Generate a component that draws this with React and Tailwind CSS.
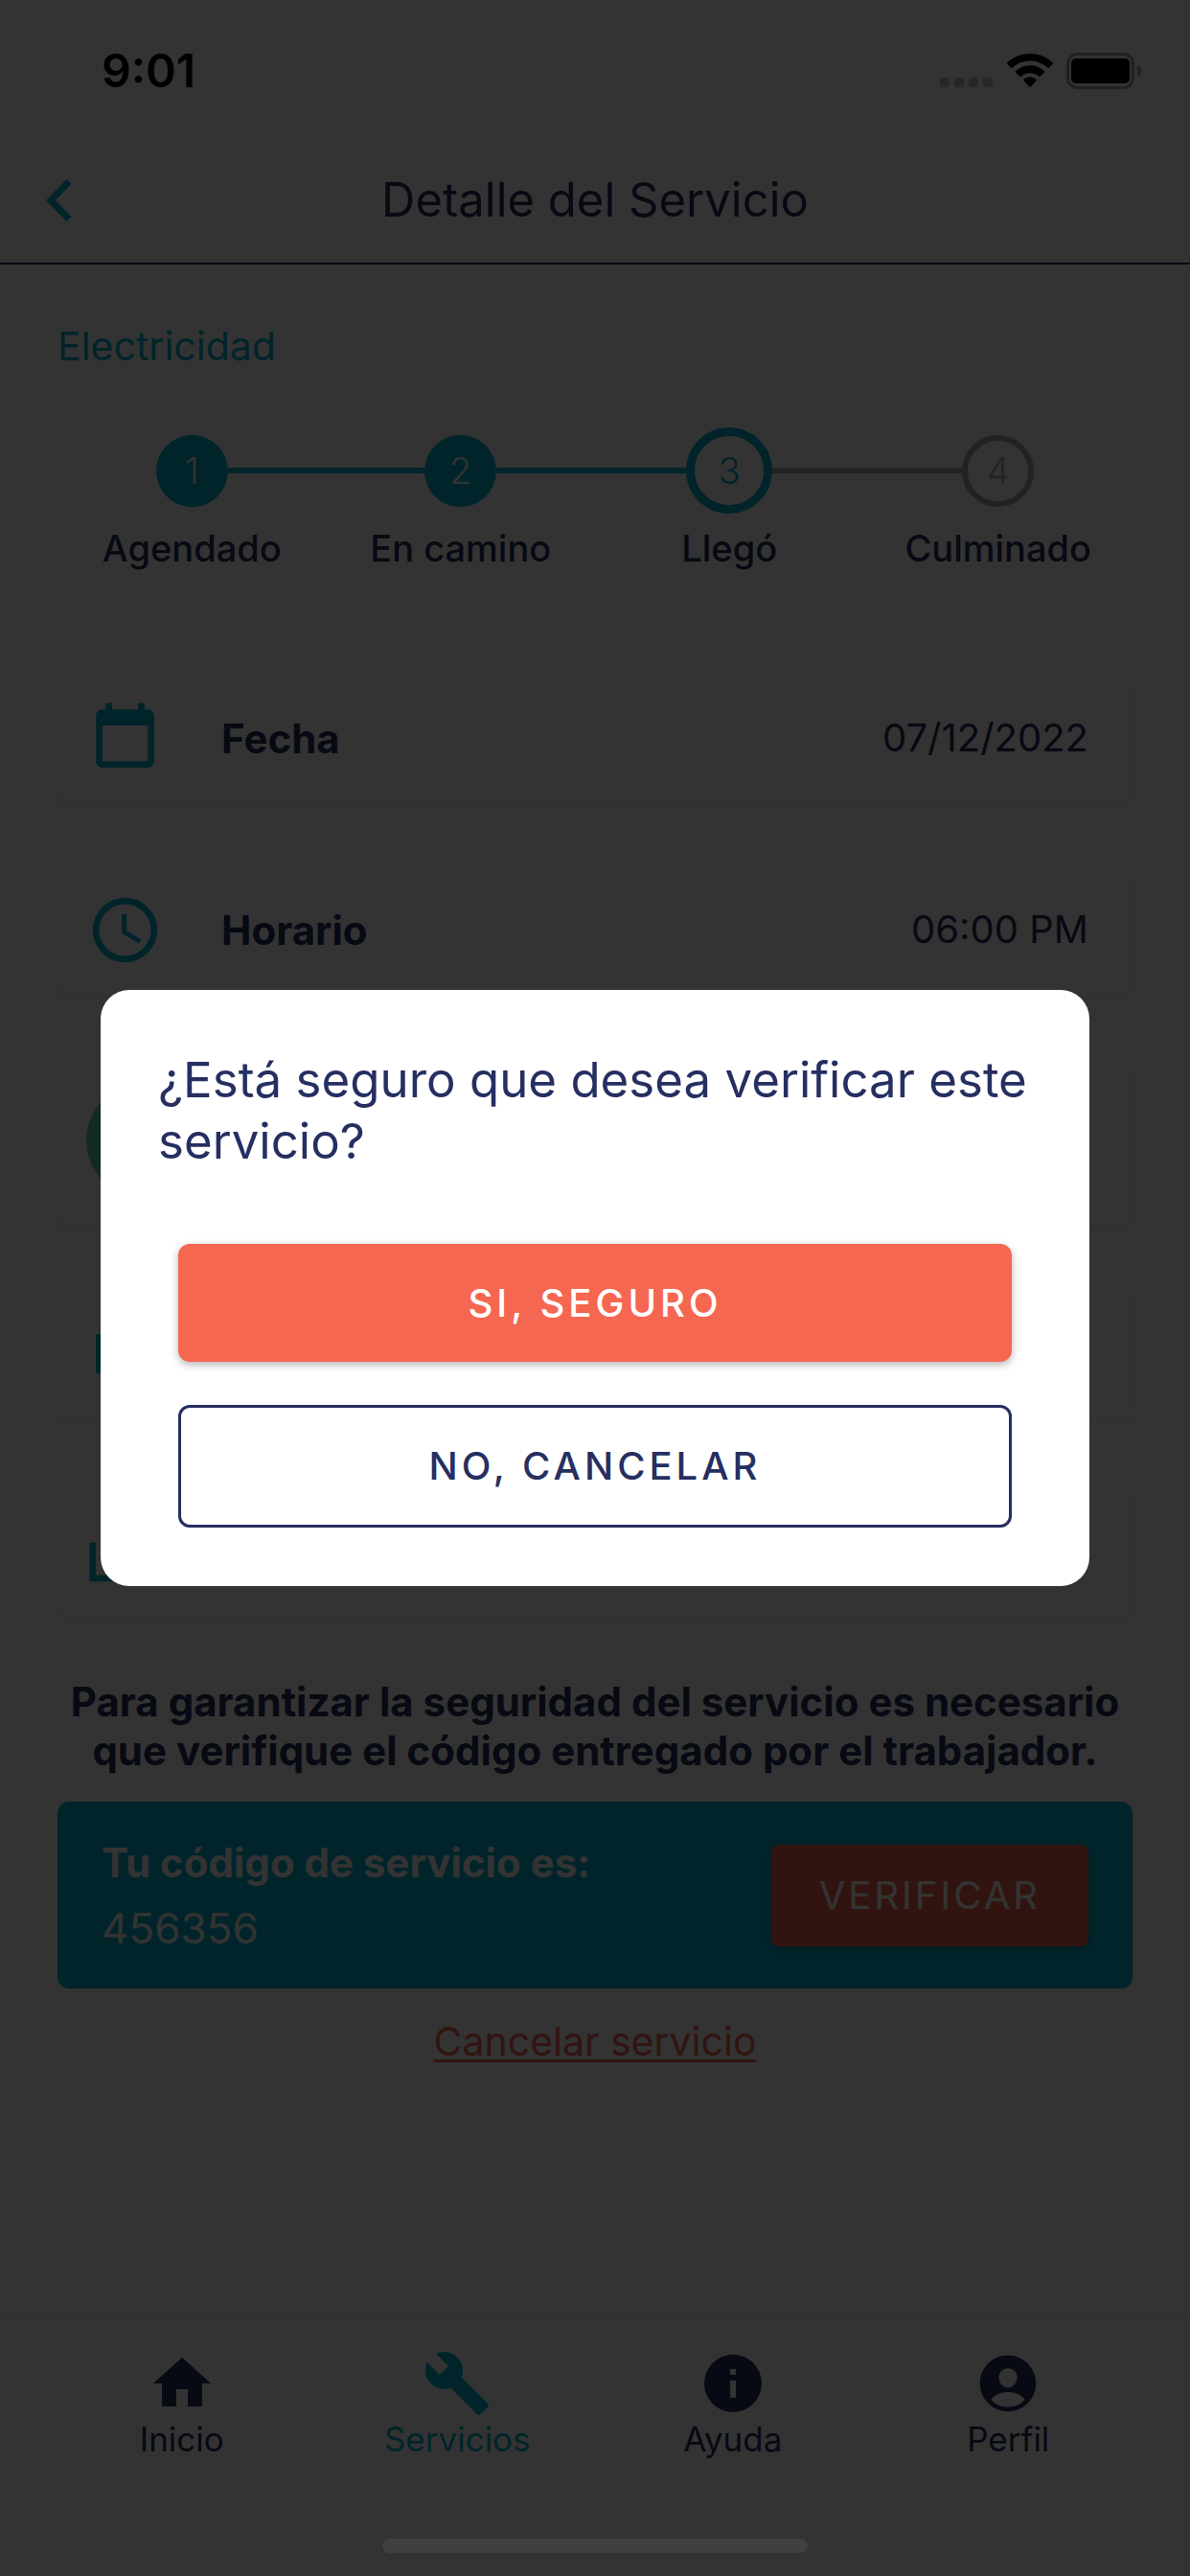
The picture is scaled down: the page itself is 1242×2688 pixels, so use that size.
import React, { useState } from 'react'
import { IoPersonCircle } from 'react-icons/io5'

const ICONS = {
  calendar: 'M19,19H5V8H19M16,1V3H8V1H6V3H5C3.89,3 3,3.89 3,5V19A2,2 0 0,0 5,21H19A2,2 0 0,0 21,19V5C21,3.89 20.1,3 19,3H18V1',
  clock: 'M12,20A8,8 0 0,0 20,12A8,8 0 0,0 12,4A8,8 0 0,0 4,12A8,8 0 0,0 12,20M12,2A10,10 0 0,1 22,12A10,10 0 0,1 12,22C6.47,22 2,17.5 2,12A10,10 0 0,1 12,2M12.5,7V12.25L17,14.92L16.25,16.15L11,13V7H12.5Z',
  cash: 'M3,6H21V18H3V6M12,9A3,3 0 0,1 15,12A3,3 0 0,1 12,15A3,3 0 0,1 9,12A3,3 0 0,1 12,9M7,8A2,2 0 0,1 5,10V14A2,2 0 0,1 7,16H17A2,2 0 0,1 19,14V10A2,2 0 0,1 17,8H7Z',
  cashMultiple: 'M5,6H23V18H5V6M14,9A3,3 0 0,1 17,12A3,3 0 0,1 14,15A3,3 0 0,1 11,12A3,3 0 0,1 14,9M9,8A2,2 0 0,1 7,10V14A2,2 0 0,1 9,16H19A2,2 0 0,1 21,14V10A2,2 0 0,1 19,8H9M1,10H3V20H19V22H1V10Z',
  home: 'M10,20V14H14V20H19V12H22L12,3L2,12H5V20H10Z',
  wrench: 'M22.7,19L13.6,9.9C14.5,7.6 14,4.9 12.1,3C10.1,1 7.1,0.6 4.7,1.7L9,6L6,9L1.6,4.7C0.4,7.1 0.9,10.1 2.9,12.1C4.8,14 7.5,14.5 9.8,13.6L18.9,22.7C19.3,23.1 19.9,23.1 20.3,22.7L22.6,20.4C23.1,20 23.1,19.3 22.7,19Z',
  info: 'M13,9H11V7H13M13,17H11V11H13M12,2A10,10 0 0,0 2,12A10,10 0 0,0 12,22A10,10 0 0,0 22,12A10,10 0 0,0 12,2Z',
}

const STEPS = [
  { label: 'Agendado', status: 'done' },
  { label: 'En camino', status: 'done' },
  { label: 'Llegó', status: 'current' },
  { label: 'Culminado', status: 'pending' },
]

const CIRCLE = {
  done: 'size-[75px] bg-[#00b4d2] text-white',
  current: 'size-[90px] border-9 border-[#00b4d2] text-[#00b4d2]',
  pending: 'size-[75px] border-6 border-[#aaaaaa] text-[#aaaaaa]',
}

const TABS = [
  { label: 'Inicio', icon: 'home' },
  { label: 'Servicios', icon: 'wrench', active: true },
  { label: 'Ayuda', icon: 'info' },
  { label: 'Perfil' },
]

function Icon({ name, className }) {
  return (
    <svg viewBox="0 0 24 24" fill="currentColor" fillRule="evenodd" className={className} aria-hidden="true">
      <path d={ICONS[name]} />
    </svg>
  )
}

function StatusBar() {
  return (
    <div className="flex h-36 items-center justify-between pt-1 pr-[50px] pl-[106px] text-black">
      <span className="text-[48px] font-semibold">9:01</span>
      <div className="flex items-center">
        <svg viewBox="0 0 56 36" className="h-9 w-14 text-[#c4c4c4]" fill="currentColor">
          <rect x="0" y="25" width="10" height="10" rx="3" />
          <rect x="15" y="25" width="10" height="10" rx="3" />
          <rect x="30" y="25" width="10" height="10" rx="3" />
          <rect x="45" y="25" width="10" height="10" rx="3" />
        </svg>
        <svg viewBox="0 0 48 36" className="ml-[14px] h-9 w-12" fill="currentColor">
          <path d="M24 0C14.800 0 6.500 3.500 .3 9.300a1 1 0 0 0 0 1.400l4 4.100a1 1 0 0 0 1.400 0A26.500 26.500 0 0 1 24 7.600c7 0 13.500 2.700 18.300 7.200a1 1 0 0 0 1.400 0l4-4.100a1 1 0 0 0 0-1.400A34.600 34.600 0 0 0 24 0z" />
          <path d="M24 12.200c-5.800 0-11 2.200-15 5.800a1 1 0 0 0 0 1.500l4.200 4.200a1 1 0 0 0 1.400 0 14.200 14.200 0 0 1 18.800 0 1 1 0 0 0 1.400 0l4.200-4.200a1 1 0 0 0 0-1.500 22.300 22.300 0 0 0-15-5.800z" />
          <path d="M24 24.300c-2.600 0-4.800 1-6.500 2.500a1 1 0 0 0 0 1.400l5.800 6.200a1 1 0 0 0 1.400 0l5.800-6.200a1 1 0 0 0 0-1.400 9.700 9.700 0 0 0-6.500-2.500z" />
        </svg>
        <svg viewBox="0 0 79 38" className="ml-[14px] h-[38px] w-[79px]">
          <rect x="1.500" y="1.500" width="68" height="35" rx="10" fill="none" stroke="#a0a0a0" strokeWidth="3" />
          <rect x="5" y="6" width="61" height="26" rx="5" fill="black" />
          <path d="M74 13c6 2 6 10 0 12z" fill="#a0a0a0" />
        </svg>
      </div>
    </div>
  )
}

function Header() {
  return (
    <header className="grid h-[132px] grid-cols-[60px_1fr_60px] items-center border-b-2 border-[#262f61] px-8">
      <button type="button" aria-label="Volver" className="flex justify-center text-[#00b4d2]">
        <svg viewBox="0 0 28 44" className="h-11 w-7" fill="none" stroke="currentColor" strokeWidth="7">
          <path d="M24 2.500L5 22L24 41.500" />
        </svg>
      </button>
      <h1 className="text-center text-[49px]">Detalle del Servicio</h1>
    </header>
  )
}

function StepLine({ hidden, active }) {
  const color = active ? 'bg-[#00b4d2]' : 'bg-[#aaaaaa]'
  return <span className={`h-[6px] flex-1 ${hidden ? 'bg-transparent' : color}`} />
}

function Stepper() {
  return (
    <ol className="mt-[60px] grid grid-cols-4">
      {STEPS.map((step, i) => (
        <li key={step.label} className="flex flex-col items-center gap-3">
          <div className="flex h-[90px] w-full items-center">
            <StepLine hidden={i === 0} active={step.status !== 'pending'} />
            <span className={`flex items-center justify-center rounded-full text-[38px] font-light ${CIRCLE[step.status]}`}>{i + 1}</span>
            <StepLine hidden={i === STEPS.length - 1} active={step.status === 'done'} />
          </div>
          <span className="text-[38px] leading-[48px] font-medium">{step.label}</span>
        </li>
      ))}
    </ol>
  )
}

function Card({ tall, children }) {
  return (
    <div className={`flex items-center rounded-xl bg-white pr-[46px] pl-[30px] shadow-[0_1px_5px_rgba(0,0,0,0.1)] ${tall ? 'min-h-36' : 'min-h-[140px]'}`}>
      {children}
    </div>
  )
}

function InfoCard({ icon, label, value, tall }) {
  return (
    <Card tall={tall}>
      <Icon name={icon} className="size-[81px] text-[#00b4d2]" />
      <span className="ml-[60px] flex-1 text-[42px] font-bold">{label}</span>
      <span className="text-[40px]">{value}</span>
    </Card>
  )
}

function TabBar() {
  return (
    <nav className="mt-auto grid h-[268px] grid-cols-4 items-start px-[46px] pt-[31px] shadow-[0_-3px_10px_rgba(0,0,0,0.12)]">
      {TABS.map(tab => (
        <a key={tab.label} href="#" className={`flex flex-col items-center text-[35px] leading-[44px] ${tab.active ? 'text-[#00b4d2]' : ''}`}>
          {tab.icon ? <Icon name={tab.icon} className="size-[72px]" /> : <IoPersonCircle className="size-[72px]" />}
          {tab.label}
        </a>
      ))}
    </nav>
  )
}

function ConfirmDialog({ onClose }) {
  return (
    <div className="fixed inset-0 flex items-center bg-black/80 px-[105px]">
      <div role="dialog" aria-modal="true" aria-labelledby="confirm-title"
        className="flex w-full flex-col rounded-[30px] bg-white px-[60px] pt-[62px] pb-[61px]">
        <h2 id="confirm-title" className="text-[51px] leading-[64px]">
          ¿Está seguro que desea verificar este servicio?
        </h2>
        <div className="mt-[75px] flex flex-col gap-[45px] px-[21px]">
          <button type="button" onClick={onClose}
            className="h-[123px] rounded-xl bg-[#f56750] text-[40px] font-medium tracking-[4px] text-white shadow-[0_3px_8px_rgba(0,0,0,0.3)]">
            SI, SEGURO
          </button>
          <button type="button" onClick={onClose}
            className="h-32 rounded-xl border-3 border-[#262f61] text-[40px] font-medium tracking-[4px]">
            NO, CANCELAR
          </button>
        </div>
      </div>
    </div>
  )
}

export default function App() {
  const [open, setOpen] = useState(true)

  return (
    <div className="flex min-h-screen flex-col bg-white font-[Inter,'Liberation_Sans',sans-serif] text-[#262f61]">
      <StatusBar />
      <Header />

      <main className="flex flex-col px-[60px] pt-[60px] pb-10">
        <h2 className="text-[41px] leading-[50px] text-[#00b4d2]">Electricidad</h2>
        <Stepper />

        <div className="mt-[104px] flex flex-col gap-[60px]">
          <InfoCard icon="calendar" label="Fecha" value="07/12/2022" />
          <InfoCard icon="clock" label="Horario" value="06:00 PM" />
          <Card>
            <span className="my-[30px] size-[120px] rounded-full bg-[#5fcdb4]" />
          </Card>
          <InfoCard icon="cash" tall />
          <InfoCard icon="cashMultiple" tall />
        </div>

        <p className="mt-[62px] text-center text-[42px] leading-[51px] font-bold">
          Para garantizar la seguridad del servicio es necesario que verifique el código entregado por el trabajador.
        </p>

        <div className="mt-7 flex h-[195px] items-center justify-between rounded-xl bg-[#00b4d2] px-[46px] text-white">
          <div>
            <p className="text-[42px] leading-[68px] font-bold">Tu código de servicio es:</p>
            <p className="text-[44px] leading-[68px]">456356</p>
          </div>
          <button type="button" onClick={() => setOpen(true)}
            className="h-[106px] rounded-lg bg-[#f56750] px-[50px] text-[40px] tracking-[3px] shadow-[0_2px_6px_rgba(0,0,0,0.3)]">
            VERIFICAR
          </button>
        </div>

        <a href="#" className="mt-[30px] self-center text-[41px] leading-[50px] text-[#f56750] underline decoration-3 underline-offset-4">
          Cancelar servicio
        </a>
      </main>

      <TabBar />
      {open && <ConfirmDialog onClose={() => setOpen(false)} />}
      <div className="fixed inset-x-0 bottom-6 mx-auto h-[15px] w-[444px] rounded-full bg-[#404040]" />
    </div>
  )
}
